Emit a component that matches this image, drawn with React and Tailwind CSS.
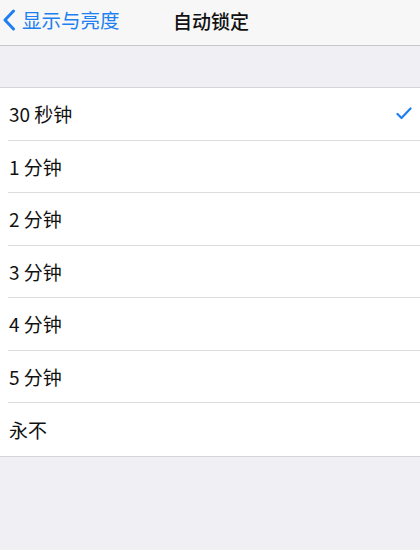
export default function App() {
  const rows = ["30 秒钟", "1 分钟", "2 分钟", "3 分钟", "4 分钟", "5 分钟", "永不"];
  return (
    <div
      className="w-[420px] h-[550px] bg-[#efeff4] overflow-hidden"
      style={{ fontFamily: '"Noto Sans CJK SC", "Noto Sans", sans-serif' }}
    >
      <div className="relative h-[46px] bg-[#f7f7f8] border-b border-[#c8c7cc] flex items-center pb-[5px]">
        <div className="flex items-center pl-[3px] text-[#1d7ff0]">
          <svg width="13" height="22" viewBox="0 0 13 22" className="mr-[6px]">
            <path d="M10.5 2 L2 11 L10.5 20" fill="none" stroke="#1d7ff0" strokeWidth="3" strokeLinecap="round" strokeLinejoin="round" />
          </svg>
          <span className="text-[19.5px] leading-none">显示与亮度</span>
        </div>
        <div className="absolute left-0 right-0 top-0 h-[40px] flex items-center justify-center pointer-events-none">
          <span className="text-[19px] leading-none text-[#111] font-medium ml-[2px]">自动锁定</span>
        </div>
      </div>
      <div className="h-[41px]" />
      <div className="bg-white border-t border-b border-[#d6d6da]">
        {rows.map((r, i) => (
          <div key={r} className="pl-[8px]">
            <div
              className={
                "h-[52.5px] flex items-center justify-between pr-[8px] " +
                (i < rows.length - 1 ? "border-b border-[#dcdce0]" : "")
              }
            >
              <span className="pl-[1px] text-[19px] leading-none text-[#111]">{r}</span>
              {i === 0 && (
                <svg width="16" height="13" viewBox="0 0 16 13">
                  <path d="M1.5 7 L5.5 11 L14.5 1.5" fill="none" stroke="#1d7ff0" strokeWidth="2.2" strokeLinecap="round" strokeLinejoin="round" />
                </svg>
              )}
            </div>
          </div>
        ))}
      </div>
    </div>
  );
}
